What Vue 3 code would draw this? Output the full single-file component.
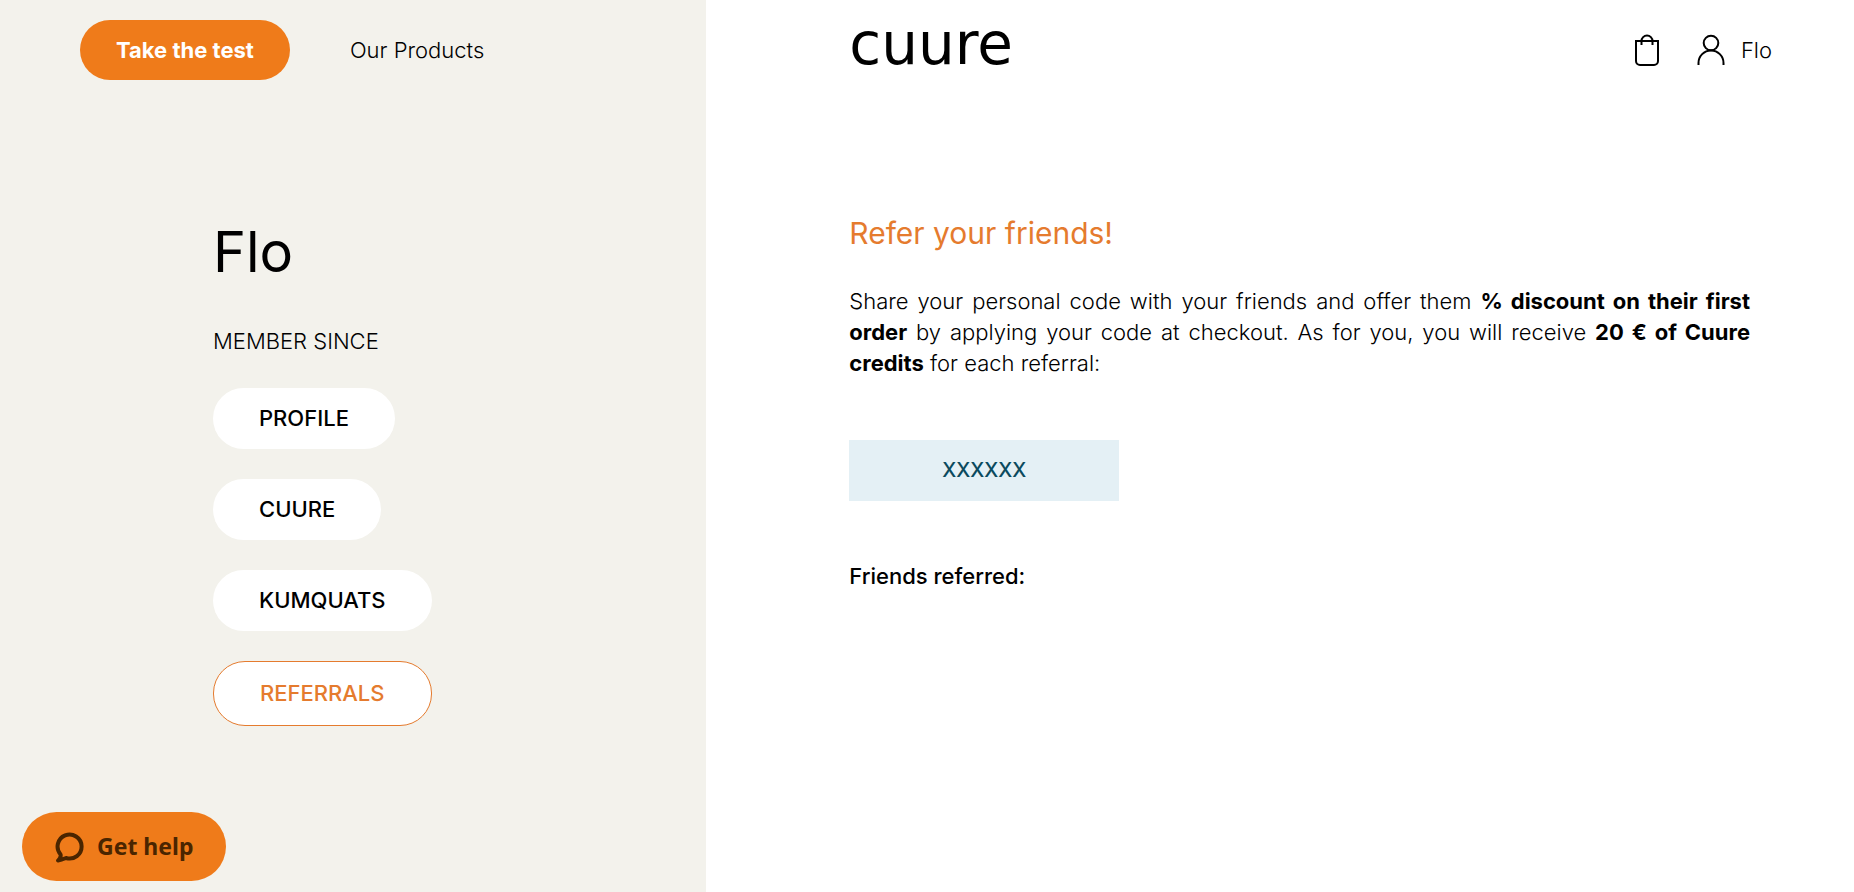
<template>
  <div class="page">
    <aside class="side">
      <nav class="topbar">
        <button type="button" class="cta">Take the test</button>
        <a href="#" class="toplink">Our Products</a>
      </nav>
      <div class="account">
        <h1>Flo</h1>
        <p class="since">MEMBER SINCE</p>
        <ul class="menu">
          <li v-for="item in menu" :key="item">
            <button type="button" class="tab" :class="{ active: item === current }" @click="current = item">{{ item }}</button>
          </li>
        </ul>
      </div>
    </aside>

    <main class="content">
      <header class="topbar">
        <a href="#" class="logo">cuure</a>
        <div class="tools">
          <a href="#" class="bag" aria-label="Cart">
            <svg width="26" height="34" viewBox="0 0 26 34" fill="none" stroke="#000" stroke-width="2">
              <path d="M2 8h22v20a4 4 0 0 1-4 4H6a4 4 0 0 1-4-4z" />
              <path d="M7.500 12V8a5.500 5.500 0 0 1 11 0v4" />
            </svg>
          </a>
          <a href="#" class="user">
            <svg width="28" height="32" viewBox="0 0 28 32" fill="none" stroke="#000" stroke-width="2">
              <circle cx="14" cy="9" r="7.300" />
              <path d="M1.500 31v-2a12.500 12.500 0 0 1 25 0v2" />
            </svg>
            <span>Flo</span>
          </a>
        </div>
      </header>

      <section class="referral">
        <h2>Refer your friends!</h2>
        <p class="text">
          Share your personal code with your friends and offer them <b>% discount on their first order</b>
          by applying your code at checkout. As for you, you will receive <b>20 € of Cuure credits</b> for each referral:
        </p>
        <div class="code">{{ code }}</div>
        <h3>Friends referred:</h3>
      </section>
    </main>

    <button type="button" class="help">
      <svg width="30" height="32" viewBox="0 0 30 32" fill="none" stroke="#4a2500" stroke-width="4" stroke-linejoin="round">
        <path d="M3 29.500c2-1.500 3-3.500 2.600-6A12 12 0 1 1 11 27c-2.500 1-5 2-8 2.500z" />
      </svg>
      <span>Get help</span>
    </button>
  </div>
</template>

<script setup>
import { ref } from 'vue'

const menu = ['PROFILE', 'CUURE', 'KUMQUATS', 'REFERRALS']
const current = ref('REFERRALS')
const code = ref('XXXXXX')
</script>

<style>
body {
  margin: 0;
  background: #fff;
}
</style>

<style scoped>
.page {
  display: grid;
  grid-template-columns: 8fr 13fr;
  min-height: 100vh;
  font-family: Inter, "Liberation Sans", sans-serif;
  font-size: 22px;
  font-weight: 300;
  line-height: 31px;
  color: #000;
}

a {
  color: inherit;
  text-decoration: none;
}

button {
  border: 0;
  font: inherit;
  cursor: pointer;
}

.side {
  background: #f3f2ec;
}

.topbar {
  display: flex;
  align-items: center;
  height: 100px;
}

.side .topbar {
  gap: 60px;
  padding-left: 80px;
}

.cta {
  height: 60px;
  padding: 0 36px;
  border-radius: 30px;
  background: #ef7b1a;
  color: #fff;
  font-weight: 700;
}

.account {
  padding: 118px 0 0 213px;
}

h1 {
  margin: 0;
  font-size: 56px;
  font-weight: 400;
  line-height: 68px;
}

.since {
  margin: 40px 0 31px;
}

.menu {
  display: flex;
  flex-direction: column;
  gap: 30px;
  margin: 0;
  padding: 0;
  list-style: none;
}

.menu li {
  display: flex;
}

.tab {
  padding: 15px 46px;
  border-radius: 32px;
  background: #fff;
  color: #000;
  font-weight: 500;
}

.tab.active {
  padding: 16px 46px;
  border: 1px solid #e57b2e;
  color: #e57b2e;
}

.content {
  padding: 0 104px 0 143px;
}

.content .topbar {
  justify-content: space-between;
  margin-right: -22px;
}

.logo {
  padding-bottom: 12px;
  font-family: "DejaVu Sans", sans-serif;
  font-size: 58px;
  font-weight: 400;
  line-height: 60px;
}

.tools,
.user {
  display: flex;
  align-items: center;
}

.tools {
  gap: 37px;
}

.user {
  gap: 16px;
}

.tools svg {
  display: block;
}

h2 {
  margin: 113px 0 33px;
  color: #e57b2e;
  font-size: 30px;
  font-weight: 400;
  line-height: 40px;
}

.text {
  margin: 0 0 61px;
  text-align: justify;
}

.text b {
  font-weight: 700;
}

.code {
  width: 270px;
  padding: 15px 0;
  background: #e4f0f5;
  color: #0b4a5e;
  font-size: 20px;
  font-weight: 500;
  text-align: center;
}

h3 {
  margin: 60px 0 0;
  font-size: 22px;
  font-weight: 500;
}

.help {
  position: fixed;
  left: 22px;
  bottom: 11px;
  display: flex;
  align-items: center;
  gap: 12px;
  height: 69px;
  padding: 0 33px;
  border-radius: 35px;
  background: #ef7b1a;
  color: #4a2500;
  font-family: "Noto Sans", sans-serif;
  font-size: 23px;
  font-weight: 700;
}
</style>
